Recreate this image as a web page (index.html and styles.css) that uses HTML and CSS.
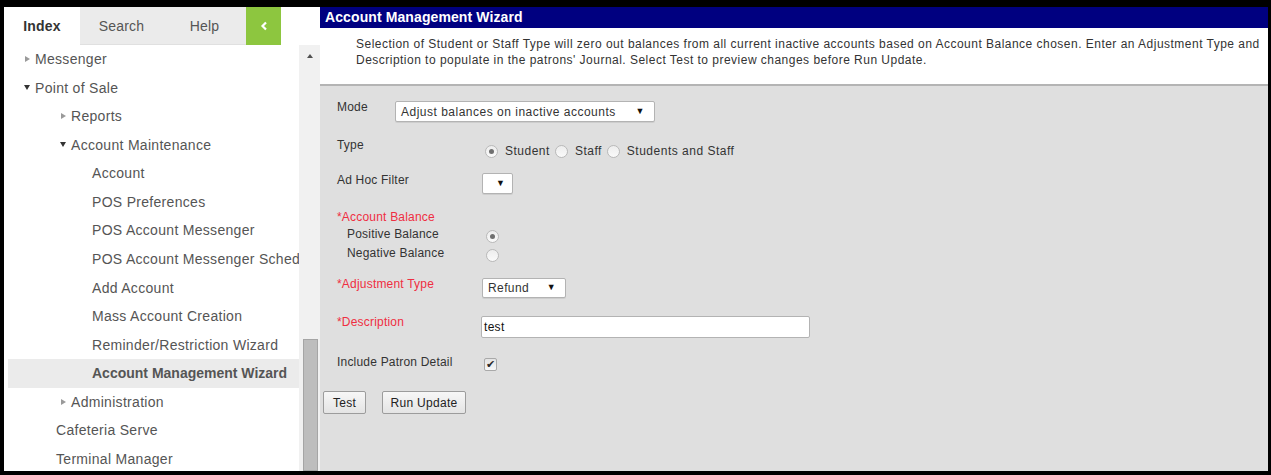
FILE: index.html
```html
<!DOCTYPE html>
<html lang="en">
<head>
<meta charset="utf-8">
<title>Account Management Wizard</title>
<link rel="stylesheet" href="styles.css">
</head>
<body>
<div class="frame">
  <aside class="sidebar">
    <nav class="tabs">
      <div class="tab tab-active">Index</div>
      <div class="tab">Search</div>
      <div class="tab">Help</div>
      <div class="tab tab-collapse">
        <svg width="8" height="10" viewBox="0 0 8 10"><path d="M6 1.5 L2.5 5 L6 8.5" fill="none" stroke="#fff" stroke-width="2.2"/></svg>
      </div>
      <div class="tab-fill"></div>
    </nav>
    <div class="tree-wrap">
      <ul class="tree">
        <li class="node lvl1"><span class="caret caret-right"></span>Messenger</li>
        <li class="node lvl1"><span class="caret caret-down"></span>Point of Sale</li>
        <li class="node lvl2"><span class="caret caret-right"></span>Reports</li>
        <li class="node lvl2"><span class="caret caret-down"></span>Account Maintenance</li>
        <li class="node leaf3">Account</li>
        <li class="node leaf3">POS Preferences</li>
        <li class="node leaf3">POS Account Messenger</li>
        <li class="node leaf3">POS Account Messenger Schedule</li>
        <li class="node leaf3">Add Account</li>
        <li class="node leaf3">Mass Account Creation</li>
        <li class="node leaf3">Reminder/Restriction Wizard</li>
        <li class="node leaf3 current">Account Management Wizard</li>
        <li class="node lvl2"><span class="caret caret-right"></span>Administration</li>
        <li class="node leaf1">Cafeteria Serve</li>
        <li class="node leaf1">Terminal Manager</li>
      </ul>
      <div class="scrollbar">
        <span class="scroll-up"></span>
        <span class="scroll-thumb"></span>
      </div>
    </div>
  </aside>

  <main class="main">
    <header class="title-bar">Account Management Wizard</header>
    <p class="intro">Selection of Student or Staff Type will zero out balances from all current inactive accounts based on Account Balance chosen. Enter an Adjustment Type and Description to populate in the patrons' Journal. Select Test to preview changes before Run Update.</p>

    <form class="form">
      <div class="row row-mode">
        <div class="label label-mode">Mode</div>
        <div class="select select-mode"><span>Adjust balances on inactive accounts</span><i class="arrow">▼</i></div>
      </div>

      <div class="row row-type">
        <div class="label">Type</div>
        <div class="radios">
          <span class="radio checked"></span><span class="radio-text">Student</span>
          <span class="radio"></span><span class="radio-text">Staff</span>
          <span class="radio"></span><span class="radio-text">Students and Staff</span>
        </div>
      </div>

      <div class="row row-adhoc">
        <div class="label">Ad Hoc Filter</div>
        <div class="select select-adhoc"><i class="arrow">▼</i></div>
      </div>

      <div class="balance">
        <div class="label required">*Account Balance</div>
        <div class="row row-sub">
          <div class="label sub-label">Positive Balance</div>
          <span class="radio checked"></span>
        </div>
        <div class="row row-sub">
          <div class="label sub-label">Negative Balance</div>
          <span class="radio"></span>
        </div>
      </div>

      <div class="row row-adjust">
        <div class="label required">*Adjustment Type</div>
        <div class="select select-adjust"><span>Refund</span><i class="arrow">▼</i></div>
      </div>

      <div class="row row-desc">
        <div class="label required">*Description</div>
        <div class="text-input">test</div>
      </div>

      <div class="row row-detail">
        <div class="label">Include Patron Detail</div>
        <span class="checkbox">✔</span>
      </div>

      <div class="actions">
        <button type="button" class="btn btn-test">Test</button>
        <button type="button" class="btn btn-run">Run Update</button>
      </div>
    </form>
  </main>
</div>
</body>
</html>
```

FILE: styles.css
```css
* { box-sizing: border-box; }

html, body {
  margin: 0;
  padding: 0;
  background: #000;
}

body {
  font-family: "Liberation Sans", Arial, sans-serif;
  color: #333;
}

.frame {
  width: 1271px;
  height: 475px;
  border-style: solid;
  border-color: #000;
  border-width: 7px 3px 4px 4px;
  display: flex;
  overflow: hidden;
  background: #fff;
}

/* ---------- sidebar ---------- */

.sidebar {
  width: 316px;
  flex: none;
  display: flex;
  flex-direction: column;
  background: #fff;
}

.tabs {
  height: 38px;
  display: flex;
  flex: none;
}

.tab {
  width: 83px;
  background: #ebebeb;
  color: #555;
  font-size: 14px;
  letter-spacing: 0.2px;
  display: flex;
  align-items: center;
  justify-content: center;
  border-bottom: 1px solid #e0e0e0;
}

.tab-active {
  width: 76px;
  background: #fff;
  color: #333;
  font-weight: bold;
  border-bottom: none;
}

.tab-collapse {
  width: 35px;
  background: #8dc63f;
  border-bottom: none;
}

.tab-fill {
  flex: 1;
  background: #fff;
}

.tree-wrap {
  flex: 1;
  display: flex;
  min-height: 0;
}

.tree {
  list-style: none;
  margin: 0;
  padding: 0 0 0 4px;
  flex: 1;
  overflow: hidden;
}

.node {
  height: 28.57px;
  line-height: 28.57px;
  font-size: 14px;
  letter-spacing: 0.3px;
  color: #555;
  white-space: nowrap;
  overflow: hidden;
  display: flex;
  align-items: center;
}

.lvl1 { padding-left: 16px; }
.lvl2 { padding-left: 52px; }
.leaf3 { padding-left: 84px; }
.leaf1 { padding-left: 48px; }

.node.current {
  background: #ebebeb;
  font-weight: bold;
  letter-spacing: 0;
}

.caret {
  width: 7px;
  height: 7px;
  margin-right: 4px;
  position: relative;
  flex: none;
}

.caret-right::before {
  content: "";
  position: absolute;
  left: 1px;
  top: 0;
  border-left: 5px solid #9a9a9a;
  border-top: 3.5px solid transparent;
  border-bottom: 3.5px solid transparent;
}

.caret-down::before {
  content: "";
  position: absolute;
  left: 0;
  top: 1px;
  border-top: 5px solid #333;
  border-left: 3.5px solid transparent;
  border-right: 3.5px solid transparent;
}

.scrollbar {
  width: 21px;
  flex: none;
  background: #f1f1f1;
  display: flex;
  flex-direction: column;
  align-items: center;
}

.scroll-up {
  margin-top: 9px;
  border-bottom: 4px solid #505050;
  border-left: 3.5px solid transparent;
  border-right: 3.5px solid transparent;
}

.scroll-thumb {
  margin-top: 281px;
  width: 15px;
  height: 160px;
  margin-left: 1px;
  background: #bdbdbd;
  border: 1px solid #a5a5a5;
}

/* ---------- main panel ---------- */

.main {
  flex: 1;
  display: flex;
  flex-direction: column;
  background: #dfdfdf;
}

.title-bar {
  height: 21px;
  background: #000080;
  color: #fff;
  font-size: 14px;
  font-weight: bold;
  line-height: 21px;
  padding-left: 5px;
  letter-spacing: 0.1px;
}

.intro {
  margin: 0;
  height: 58px;
  background: #fff;
  padding: 8px 6px 0 36px;
  font-size: 12px;
  line-height: 16px;
  letter-spacing: 0.48px;
  color: #333;
  border-bottom: 2px solid #b4b4b4;
}

.form {
  padding: 14px 0 0 17px;
  font-size: 12px;
  letter-spacing: 0.2px;
  color: #333;
}

.row {
  display: flex;
  align-items: flex-start;
}

.label {
  width: 145px;
  flex: none;
  line-height: 14px;
  white-space: nowrap;
}

.label-mode { width: 58px; }

.required { color: #ef2e42; }

.row-mode { height: 38px; }
.row-type { height: 35px; }
.row-adhoc { height: 37px; }
.balance { height: 67px; }
.row-adjust { height: 38px; }
.row-desc { height: 40px; }
.row-detail { height: 36px; }

.select {
  height: 21px;
  background: #fff;
  border: 1px solid #b3b3b3;
  border-radius: 2px;
  box-shadow: 0 1px 0 rgba(0, 0, 0, 0.08);
  display: flex;
  align-items: center;
  padding-left: 5px;
  font-size: 12px;
  position: relative;
}

.select .arrow {
  font-style: normal;
  font-size: 9px;
  color: #111;
  position: absolute;
  top: 4px;
}

.select-mode {
  width: 260px;
  margin-top: 1px;
  letter-spacing: 0.5px;
}
.select-mode .arrow { right: 9px; }

.select-adhoc { width: 31px; }
.select-adhoc .arrow { left: 13px; }

.select-adjust {
  width: 84px;
  height: 20px;
  margin-top: 1px;
  letter-spacing: 0.4px;
}
.select-adjust .arrow { right: 9px; top: 3px; }

.radios {
  display: flex;
  align-items: center;
  margin-top: 6px;
}

.radio {
  width: 13px;
  height: 13px;
  border-radius: 50%;
  border: 1px solid #b9b9b9;
  background: linear-gradient(#ededed, #fafafa);
  margin-left: 3px;
  margin-right: 7px;
  flex: none;
  position: relative;
}

.radios .radio:not(:first-child) { margin-left: 5px; }

.radio.checked::after {
  content: "";
  position: absolute;
  left: 3px;
  top: 3px;
  width: 5px;
  height: 5px;
  border-radius: 50%;
  background: #6f6f6f;
}

.radio-text {
  line-height: 14px;
  letter-spacing: 0.5px;
}

.balance .required { margin-bottom: 3px; }

.row-sub { height: 19px; }

.sub-label {
  padding-left: 10px;
}

.row-sub .radio {
  margin-top: 3px;
  margin-left: 4px;
}

.text-input {
  width: 329px;
  height: 22px;
  margin-top: 1px;
  margin-left: -1px;
  background: #fff;
  border: 1px solid #b3b3b3;
  border-radius: 2px;
  padding-left: 2px;
  line-height: 20px;
  font-size: 12px;
  color: #111;
  letter-spacing: 0.3px;
}

.checkbox {
  width: 13px;
  height: 13px;
  margin-top: 3px;
  margin-left: 2px;
  border: 1px solid #a9a9a9;
  border-radius: 2px;
  background: linear-gradient(#e3e3e3, #f7f7f7);
  font-size: 11px;
  line-height: 11px;
  text-align: center;
  color: #2a2a2a;
  letter-spacing: 0;
}

.actions {
  display: flex;
  gap: 16px;
  margin-left: -14px;
}

.btn {
  height: 23px;
  padding: 0;
  font-family: "Liberation Sans", Arial, sans-serif;
  font-size: 12px;
  letter-spacing: 0.3px;
  color: #222;
  border: 1px solid #9c9c9c;
  border-radius: 2px;
  background: linear-gradient(#f7f7f7, #e4e4e4);
}

.btn-test { width: 43px; }
.btn-run { width: 84px; }
```
